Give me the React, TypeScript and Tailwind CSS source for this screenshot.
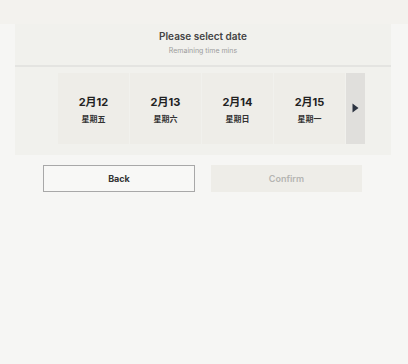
const dates = [
  { day: "2月12", week: "星期五" },
  { day: "2月13", week: "星期六" },
  { day: "2月14", week: "星期日" },
  { day: "2月15", week: "星期一" },
];

export default function App() {
  return (
    <div
      className="w-[408px] h-[364px] bg-[#f6f6f4] flex flex-col"
      style={{ fontFamily: '"Inter", "Noto Sans CJK SC", sans-serif' }}
    >
      <div className="h-[24px] bg-[#f3f2ee]" />
      <div className="mx-[15px] w-[376px] bg-[#f1f1ed] flex flex-col">
        <div className="h-[41px] flex flex-col items-center pt-[6px]">
          <h2 className="text-[10px] leading-[13px] font-semibold text-[#444]">Please select date</h2>
          <p className="text-[7px] leading-[10px] text-[#9c9c9c] mt-[3px]">Remaining time mins</p>
        </div>
        <div className="h-[2px] bg-[#e4e4e1]" />
        <div className="flex gap-[1px] pl-[43px] pt-[6px] pb-[11px]">
          {dates.map((d) => (
            <div
              key={d.day}
              className="w-[71px] h-[71px] bg-[#eeede8] flex flex-col items-center pt-[22px]"
            >
              <span className="text-[11px] leading-[14px] font-bold text-[#222]">{d.day}</span>
              <span className="text-[8px] leading-[10px] font-semibold text-[#333] mt-[5px]">{d.week}</span>
            </div>
          ))}
          <div className="w-[19px] h-[71px] bg-[#e0dfdc] flex items-center justify-center">
            <svg width="7" height="10" viewBox="0 0 7 10" className="mt-[-2px]">
              <path d="M0.5 0.5 L6.5 5 L0.5 9.5 Z" fill="#2b3340" />
            </svg>
          </div>
        </div>
      </div>
      <div className="flex gap-[16px] pl-[43px] mt-[10px]">
        <button className="w-[152px] h-[27px] border border-[#a8a8a8] bg-[#f8f8f6] text-[9px] font-bold text-[#333]">
          Back
        </button>
        <button className="w-[151px] h-[27px] bg-[#eeede8] text-[9px] font-semibold text-[#b5b5b2]">
          Confirm
        </button>
      </div>
    </div>
  );
}
